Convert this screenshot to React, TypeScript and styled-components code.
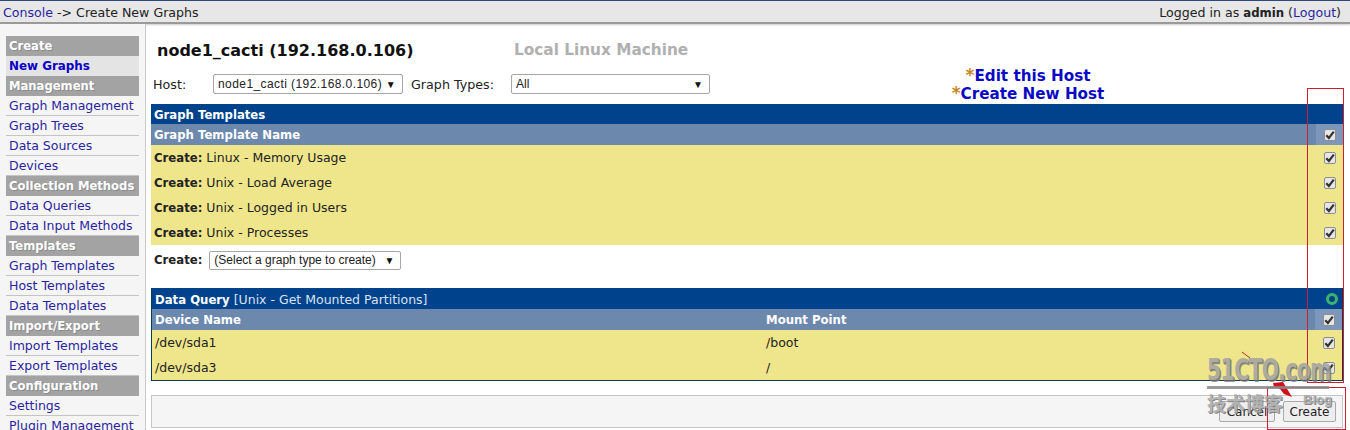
import React from "react";
import styled, { createGlobalStyle } from "styled-components";

const GlobalStyle = createGlobalStyle`
  html, body {
    margin: 0;
    padding: 0;
    background: #fff;
    overflow: hidden;
  }
  body {
    font-family: "DejaVu Sans", Verdana, sans-serif;
    font-size: 12.5px;
    color: #222;
  }
`;

const Page = styled.div`
  position: relative;
  width: 1350px;
  height: 430px;
  overflow: hidden;
`;

const TopBar = styled.div`
  height: 20px;
  border-top: 1px solid #2c4a80;
  border-bottom: 2px solid #9a9a9a;
  background: #e7e7e7;
  box-shadow: 0 1px 2px #ccc;
  display: flex;
  align-items: center;
  justify-content: space-between;
  padding: 1px 9px 0 3px;
  font-size: 12.6px;
`;

const Link = styled.a`
  color: #2a1fa0;
`;

const Body = styled.div`
  display: flex;
  height: 406px;
`;

const Sidebar = styled.nav`
  width: 139px;
  flex: none;
  padding: 12px 0 0 6px;
  background: #f5f5f5;
  border-right: 1px solid #c9c9c9;
  overflow: hidden;
`;

const MenuHead = styled.div`
  width: 133px;
  height: 20px;
  line-height: 20px;
  background: #a3a3a3;
  color: #fff;
  font-weight: bold;
  font-size: 11.6px;
  padding-left: 3px;
  box-sizing: border-box;
  text-shadow: 1px 1px 0 #8b8b8b;
  white-space: nowrap;
`;

const MenuItem = styled.div<{ $active?: boolean }>`
  width: 133px;
  height: 20px;
  line-height: ${(p) => (p.$active ? "21px" : "19px")};
  padding-left: 3px;
  box-sizing: border-box;
  white-space: nowrap;
  color: ${(p) => (p.$active ? "#0a00c8" : "#2a1fa0")};
  font-weight: ${(p) => (p.$active ? "bold" : "normal")};
  font-size: ${(p) => (p.$active ? "11.9px" : "12.5px")};
  background: ${(p) => (p.$active ? "#e4e4e4" : "transparent")};
  border-bottom: ${(p) => (p.$active ? "none" : "1px solid #c4c4c4")};
`;

const Main = styled.main`
  flex: 1;
  padding: 0 7px 0 5px;
  min-width: 0;
`;

const Head = styled.div`
  display: flex;
  height: 80px;
`;

const HeadLeft = styled.div`
  width: 757px;
  flex: none;
`;

const TitleRow = styled.div`
  display: flex;
  align-items: center;
  height: 30px;
  margin-top: 11px;
  padding-left: 6px;
`;

const Title = styled.h1`
  margin: 0;
  width: 357px;
  font-size: 16px;
  font-weight: bold;
  color: #111;
  white-space: nowrap;
`;

const Subtitle = styled.span`
  font-size: 15.3px;
  font-weight: bold;
  color: #b0b0b0;
  white-space: nowrap;
`;

const FilterRow = styled.div`
  display: flex;
  align-items: center;
  height: 20px;
  margin-top: 9px;
  padding-left: 2px;
`;

const FilterLabel = styled.span<{ $w: number; $pad?: number }>`
  width: ${(p) => p.$w}px;
  padding-left: ${(p) => p.$pad ?? 0}px;
  box-sizing: border-box;
  flex: none;
  white-space: nowrap;
  font-size: 12.7px;
`;

const SelectBox = styled.div<{ $w: number; $h?: number; $track?: number }>`
  width: ${(p) => p.$w}px;
  height: ${(p) => p.$h ?? 20}px;
  box-sizing: border-box;
  flex: none;
  display: flex;
  align-items: center;
  justify-content: space-between;
  border: 1px solid #a6a6a6;
  border-radius: 2px;
  background: #fff;
  padding: 0 6px 0 4px;
  font-family: "Liberation Sans", Arial, sans-serif;
  font-size: 12px;
  letter-spacing: ${(p) => p.$track ?? 0}px;
  color: #222;
  white-space: nowrap;
`;

const Arrow = styled.span`
  font-size: 10px;
  color: #111;
`;

const HeadLinks = styled.div`
  width: 240px;
  padding: 43px 0 0 0;
  text-align: center;
  font-size: 15.2px;
  font-weight: bold;
  line-height: 18px;
  white-space: nowrap;
`;

const Star = styled.span`
  color: #c8862a;
  font-size: 17px;
  line-height: 0;
`;

const BlueLink = styled.a`
  color: #0a0ac4;
`;

const Table = styled.section<{ $framed?: boolean }>`
  box-sizing: border-box;
  width: 1192px;
  ${(p) => (p.$framed ? "border: 1px solid #0d3b4f; border-top: none;" : "")}
`;

const TitleBar = styled.div<{ $pad: number; $h?: number }>`
  height: ${(p) => p.$h ?? 20}px;
  box-sizing: border-box;
  background: #00438c;
  color: #fff;
  display: flex;
  align-items: center;
  justify-content: space-between;
  padding: 1px 4px 0 ${(p) => p.$pad}px;
`;

const Strong = styled.b`
  font-weight: bold;
  font-size: 11.7px;
`;

const QueryName = styled.span`
  color: #d9e2f0;
`;

const HeadRow = styled.div<{ $pad: number }>`
  height: 21px;
  background: #6d88ad;
  color: #fff;
  font-weight: bold;
  font-size: 11.7px;
  display: grid;
  grid-template-columns: 611px 1fr 27px;
  align-items: center;
  padding-left: ${(p) => p.$pad}px;
`;

const HeadCheckCell = styled.div`
  align-self: stretch;
  display: flex;
  align-items: center;
  justify-content: center;
  background: #7d97bb;
`;

const Row = styled.div<{ $pad: number }>`
  height: 25px;
  background: #efe68c;
  display: grid;
  grid-template-columns: 611px 1fr 27px;
  align-items: center;
  padding-left: ${(p) => p.$pad}px;
  color: #222;
`;

const CreateCell = styled.div`
  grid-column: 1 / span 2;
  white-space: nowrap;
`;

const Check = styled.span`
  width: 10px;
  height: 10px;
  justify-self: center;
  border: 1px solid #8e8e8e;
  border-radius: 2px;
  background: #e6e6e6;
  display: flex;
  align-items: center;
  justify-content: center;
`;

const CheckBox = () => (
  <Check>
    <svg width="10" height="10" viewBox="0 0 10 10">
      <path d="M1.3 5.2 L3.9 8 L8.8 1.6" fill="none" stroke="#333" strokeWidth="2.2" />
    </svg>
  </Check>
);

const CreateRow = styled.div`
  display: flex;
  align-items: center;
  gap: 7px;
  height: 30px;
  padding-left: 3px;
  margin-bottom: 13px;
`;

const Spinner = styled.span`
  width: 6px;
  height: 6px;
  flex: none;
  border: 3px solid #3bb56e;
  border-radius: 50%;
`;

const SavePanel = styled.div`
  box-sizing: border-box;
  width: 1192px;
  height: 33px;
  margin-top: 14px;
  background: #f5f5f5;
  border: 1px solid #c6c6c6;
  display: flex;
  align-items: center;
  justify-content: flex-end;
  gap: 8px;
  padding-right: 6px;
`;

const Button = styled.button<{ $w: number }>`
  width: ${(p) => p.$w}px;
  height: 21px;
  padding: 0;
  background: #eee;
  border: 1px solid #a9a9a9;
  border-radius: 2px;
  font-family: "DejaVu Sans", Verdana, sans-serif;
  font-size: 12px;
  color: #222;
`;

const Callout = styled.div<{ $x: number; $y: number; $w: number; $h: number }>`
  position: absolute;
  left: ${(p) => p.$x}px;
  top: ${(p) => p.$y}px;
  width: ${(p) => p.$w}px;
  height: ${(p) => p.$h}px;
  box-sizing: border-box;
  border: 1px solid #cc2030;
  pointer-events: none;
`;

const ArrowMark = styled.svg`
  position: absolute;
  left: 1236px;
  top: 348px;
`;

const Watermark = styled.div`
  position: absolute;
  left: 1207px;
  top: 353px;
  width: 130px;
  color: #a9a9a9;
  opacity: 0.85;
  pointer-events: none;
`;

const WmBrand = styled.div`
  font-family: "DejaVu Sans", sans-serif;
  font-weight: bold;
  font-size: 31px;
  line-height: 33px;
  letter-spacing: -1px;
  white-space: nowrap;
  transform-origin: left center;
  transform: scaleX(0.66);
  color: #a2a2a2;
  text-shadow: 1px 1px 0 #666, 2px 2px 0 #888;
`;

const WmRule = styled.div`
  height: 3px;
  width: 122px;
  background: #8a8a8a;
`;

const WmFoot = styled.div`
  display: flex;
  justify-content: space-between;
  align-items: flex-start;
  margin-top: 2px;
  padding-right: 5px;
`;

const WmCjk = styled.span`
  font-family: "Noto Sans CJK SC", sans-serif;
  font-weight: bold;
  font-size: 19px;
  line-height: 23px;
  text-shadow: 1px 1px 0 #777;
`;

const WmBlog = styled.span`
  font-family: "Liberation Sans", sans-serif;
  font-weight: bold;
  font-size: 13px;
  line-height: 16px;
  margin-top: 1px;
  text-shadow: 1px 1px 0 #777;
`;

const menu: { head: string; items: string[] }[] = [
  { head: "Create", items: ["New Graphs"] },
  { head: "Management", items: ["Graph Management", "Graph Trees", "Data Sources", "Devices"] },
  { head: "Collection Methods", items: ["Data Queries", "Data Input Methods"] },
  { head: "Templates", items: ["Graph Templates", "Host Templates", "Data Templates"] },
  { head: "Import/Export", items: ["Import Templates", "Export Templates"] },
  { head: "Configuration", items: ["Settings", "Plugin Management"] },
];

const templates = [
  "Linux - Memory Usage",
  "Unix - Load Average",
  "Unix - Logged in Users",
  "Unix - Processes",
];

const partitions = [
  { device: "/dev/sda1", mount: "/boot" },
  { device: "/dev/sda3", mount: "/" },
];

export default function App() {
  return (
    <Page>
      <GlobalStyle />
      <TopBar>
        <span>
          <Link>Console</Link> -&gt; Create New Graphs
        </span>
        <span>
          Logged in as <Strong>admin</Strong> (<Link>Logout</Link>)
        </span>
      </TopBar>
      <Body>
        <Sidebar>
          {menu.map((group) => (
            <React.Fragment key={group.head}>
              <MenuHead>{group.head}</MenuHead>
              {group.items.map((item) => (
                <MenuItem key={item} $active={item === "New Graphs"}>
                  {item}
                </MenuItem>
              ))}
            </React.Fragment>
          ))}
        </Sidebar>
        <Main>
          <Head>
            <HeadLeft>
              <TitleRow>
                <Title>node1_cacti (192.168.0.106)</Title>
                <Subtitle>Local Linux Machine</Subtitle>
              </TitleRow>
              <FilterRow>
                <FilterLabel $w={60}>Host:</FilterLabel>
                <SelectBox $w={190} $track={0.42}>
                  node1_cacti (192.168.0.106) <Arrow>▼</Arrow>
                </SelectBox>
                <FilterLabel $w={108} $pad={8}>
                  Graph Types:
                </FilterLabel>
                <SelectBox $w={199}>
                  All <Arrow>▼</Arrow>
                </SelectBox>
              </FilterRow>
            </HeadLeft>
            <HeadLinks>
              <div>
                <Star>*</Star>
                <BlueLink>Edit this Host</BlueLink>
              </div>
              <div>
                <Star>*</Star>
                <BlueLink>Create New Host</BlueLink>
              </div>
            </HeadLinks>
          </Head>

          <Table>
            <TitleBar $pad={3}>
              <Strong>Graph Templates</Strong>
            </TitleBar>
            <HeadRow $pad={3}>
              <CreateCell>Graph Template Name</CreateCell>
              <HeadCheckCell>
                <CheckBox />
              </HeadCheckCell>
            </HeadRow>
            {templates.map((name) => (
              <Row key={name} $pad={3}>
                <CreateCell>
                  <Strong>Create:</Strong> {name}
                </CreateCell>
                <CheckBox />
              </Row>
            ))}
          </Table>

          <CreateRow>
            <Strong>Create:</Strong>
            <SelectBox $w={192} $h={19}>
              (Select a graph type to create) <Arrow>▼</Arrow>
            </SelectBox>
          </CreateRow>

          <Table $framed>
            <TitleBar $pad={3} $h={21}>
              <span>
                <Strong>Data Query</Strong> <QueryName>[Unix - Get Mounted Partitions]</QueryName>
              </span>
              <Spinner />
            </TitleBar>
            <HeadRow $pad={3}>
              <span>Device Name</span>
              <span>Mount Point</span>
              <HeadCheckCell>
                <CheckBox />
              </HeadCheckCell>
            </HeadRow>
            {partitions.map((part) => (
              <Row key={part.device} $pad={3}>
                <span>{part.device}</span>
                <span>{part.mount}</span>
                <CheckBox />
              </Row>
            ))}
          </Table>

          <SavePanel>
            <Button $w={56}>Cancel</Button>
            <Button $w={53}>Create</Button>
          </SavePanel>
        </Main>
      </Body>

      <Callout $x={1307} $y={88} $w={37} $h={295} />
      <Callout $x={1267} $y={387} $w={79} $h={43} />
      <ArrowMark width="70" height="62" viewBox="0 0 70 62">
        <path d="M6 4 L14 10" stroke="#d0202c" strokeWidth="1" fill="none" />
        <path d="M37 35 L47 34 L56 49 L48 46 L44 41 L38 39 Z" fill="#d2101c" />
      </ArrowMark>
      <Watermark>
        <WmBrand>51CTO.com</WmBrand>
        <WmRule />
        <WmFoot>
          <WmCjk>技术博客</WmCjk>
          <WmBlog>Blog</WmBlog>
        </WmFoot>
      </Watermark>
    </Page>
  );
}
